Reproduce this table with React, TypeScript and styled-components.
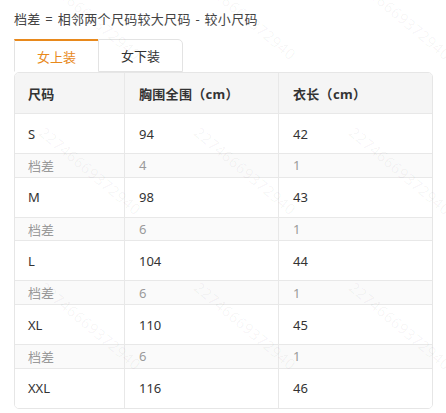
import React from "react";
import styled, { createGlobalStyle } from "styled-components";

const Global = createGlobalStyle`
  html, body { margin: 0; padding: 0; background: #fff; }
  body {
    font-family: "Noto Sans", "Noto Sans CJK SC", sans-serif;
    color: #333;
    width: 446px;
    height: 413px;
    overflow: hidden;
  }
`;

const Page = styled.div`
  position: relative;
  width: 446px;
  height: 413px;
  padding: 9px 13px 0 14px;
  box-sizing: border-box;
  overflow: hidden;
`;

const Caption = styled.div`
  font-size: 13px;
  line-height: 20px;
  letter-spacing: 0.3px;
  word-spacing: 1px;
  color: #444;
  margin-bottom: 10px;
`;

const Tabs = styled.div`
  display: flex;
  height: 33px;
`;

const Tab = styled.div<{ $active?: boolean }>`
  box-sizing: border-box;
  width: ${(p) => (p.$active ? "84px" : "85px")};
  height: 33px;
  display: flex;
  align-items: center;
  justify-content: center;
  font-size: 13px;
  background: #fff;
  color: ${(p) => (p.$active ? "#e8891c" : "#333")};
  border-left: 1px solid #e3e3e3;
  border-top: ${(p) => (p.$active ? "2px solid #e8891c" : "1px solid #e3e3e3")};
  border-right: ${(p) => (p.$active ? "none" : "1px solid #e3e3e3")};
  border-bottom: ${(p) => (p.$active ? "1px solid #fff" : "1px solid #e3e3e3")};
  border-top-right-radius: ${(p) => (p.$active ? "0" : "5px")};
  padding-top: ${(p) => (p.$active ? "1px" : "0")};
`;

const Table = styled.div`
  box-sizing: border-box;
  width: 419px;
  border: 1px solid #e6e6e6;
  border-radius: 5px;
  overflow: hidden;
`;

const Row = styled.div<{ $kind: "head" | "main" | "diff" }>`
  display: grid;
  grid-template-columns: 109px 154px 1fr;
  height: ${(p) => (p.$kind === "head" ? "40px" : p.$kind === "main" ? "40px" : "23.7px")};
  box-sizing: border-box;
  border-top: ${(p) => (p.$kind === "head" ? "none" : "1px solid #e8e8e8")};
  background: ${(p) => (p.$kind === "head" ? "#f5f5f5" : p.$kind === "diff" ? "#fafafa" : "#fff")};
  color: ${(p) => (p.$kind === "diff" ? "#9a9a9a" : "#333")};
  font-weight: ${(p) => (p.$kind === "head" ? 700 : 400)};
  letter-spacing: ${(p) => (p.$kind === "head" ? "0.3px" : "0")};
  font-size: 13px;
`;

const Cell = styled.div`
  display: flex;
  align-items: center;
  padding-left: 14px;
  border-left: 1px solid #e8e8e8;
  &:first-child { border-left: none; padding-left: 13px; }
`;

const Watermarks = styled.div`
  position: absolute;
  inset: 0;
  pointer-events: none;
  overflow: hidden;
`;

const Mark = styled.div`
  position: absolute;
  font-family: "Noto Sans", sans-serif;
  font-size: 15px;
  letter-spacing: 0.5px;
  color: rgba(0, 0, 0, 0.045);
  transform: rotate(40deg);
  transform-origin: 0 0;
  white-space: nowrap;
`;

const rows: { kind: "main" | "diff"; c: [string, string, string] }[] = [
  { kind: "main", c: ["S", "94", "42"] },
  { kind: "diff", c: ["档差", "4", "1"] },
  { kind: "main", c: ["M", "98", "43"] },
  { kind: "diff", c: ["档差", "6", "1"] },
  { kind: "main", c: ["L", "104", "44"] },
  { kind: "diff", c: ["档差", "6", "1"] },
  { kind: "main", c: ["XL", "110", "45"] },
  { kind: "diff", c: ["档差", "6", "1"] },
  { kind: "main", c: ["XXL", "116", "46"] },
];

const markSpots: [number, number][] = [];
for (let r = -1; r < 3; r++) {
  for (let c = -1; c < 3; c++) {
    markSpots.push([48 + c * 155, 122 + r * 155]);
  }
}

export default function App() {
  return (
    <>
      <Global />
      <Page>
        <Caption>档差 = 相邻两个尺码较大尺码 - 较小尺码</Caption>
        <Tabs>
          <Tab $active>女上装</Tab>
          <Tab>女下装</Tab>
        </Tabs>
        <Table>
          <Row $kind="head">
            <Cell>尺码</Cell>
            <Cell>胸围全围（cm）</Cell>
            <Cell>衣长（cm）</Cell>
          </Row>
          {rows.map((r, i) => (
            <Row key={i} $kind={r.kind}>
              <Cell>{r.c[0]}</Cell>
              <Cell>{r.c[1]}</Cell>
              <Cell>{r.c[2]}</Cell>
            </Row>
          ))}
        </Table>
        <Watermarks>
          {markSpots.map(([x, y], i) => (
            <Mark key={i} style={{ left: x, top: y }}>
              22746669372940
            </Mark>
          ))}
        </Watermarks>
      </Page>
    </>
  );
}
